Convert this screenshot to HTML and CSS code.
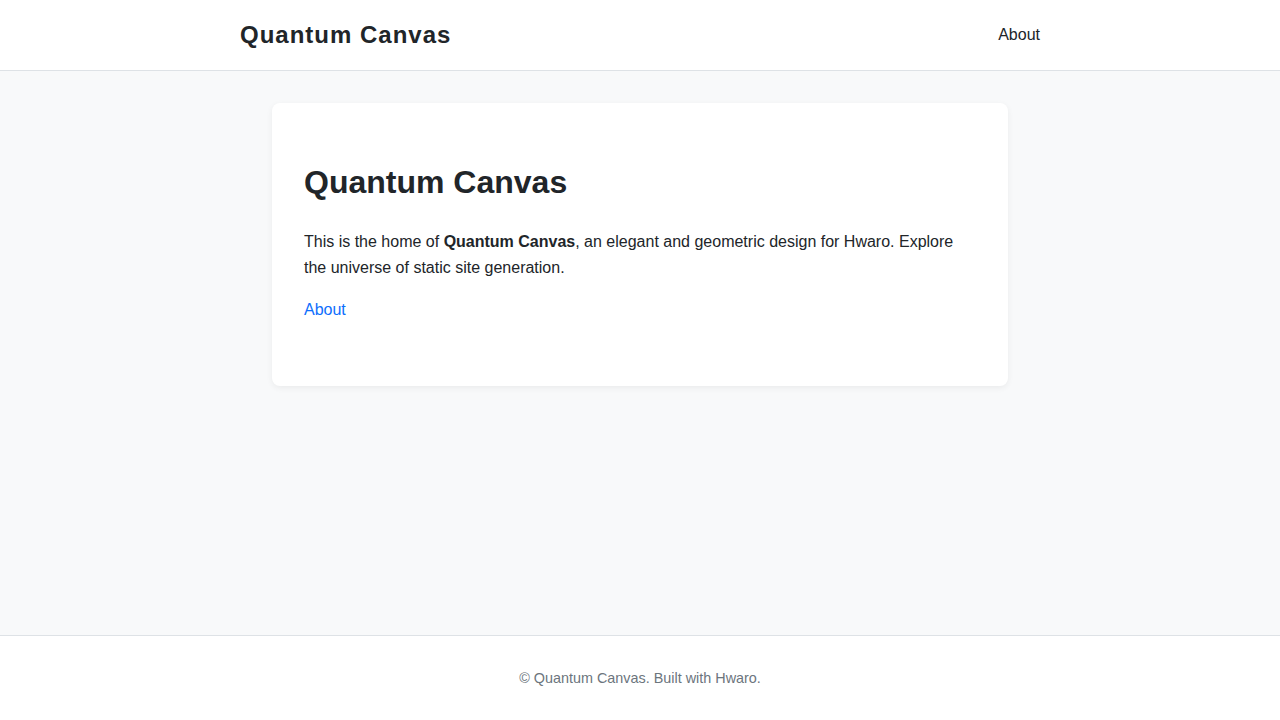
FILE: index.html
```html
<!DOCTYPE html>
<html lang="en">
<head>
<meta charset="utf-8">
<title>Quantum Canvas</title>
<link rel="stylesheet" href="styles.css">
</head>
<body>
<header class="site-header">
  <div class="header-inner">
    <a class="brand" href="#">Quantum Canvas</a>
    <nav class="nav"><a href="#">About</a></nav>
  </div>
</header>
<main class="main">
  <article class="card">
    <h1>Quantum Canvas</h1>
    <p class="intro">This is the home of <strong>Quantum Canvas</strong>, an elegant and geometric design for Hwaro. Explore the universe of static site generation.</p>
    <p class="more"><a class="link" href="#">About</a></p>
  </article>
</main>
<footer class="site-footer">
  <p>© Quantum Canvas. Built with Hwaro.</p>
</footer>
</body>
</html>
```
FILE: styles.css
```css
* { box-sizing: border-box; }
html, body { margin: 0; padding: 0; }
body {
  font-family: "Liberation Sans", Arial, sans-serif;
  font-size: 16px;
  line-height: 1.6;
  color: #212529;
  background: #f8f9fa;
  min-height: 100vh;
  display: flex;
  flex-direction: column;
}
.site-header {
  background: #fff;
  border-bottom: 1px solid #dee2e6;
}
.header-inner {
  width: 800px;
  margin: 0 auto;
  height: 70px;
  display: flex;
  align-items: center;
  justify-content: space-between;
}
.brand {
  font-size: 24px;
  font-weight: 700;
  letter-spacing: 1px;
  color: #212529;
  text-decoration: none;
}
.nav a {
  color: #212529;
  text-decoration: none;
  font-size: 16px;
}
.main {
  flex: 1;
  padding: 32px 0;
}
.card {
  width: 736px;
  margin: 0 auto;
  background: #fff;
  border-radius: 8px;
  box-shadow: 0 2px 6px rgba(0, 0, 0, 0.06);
  padding: 32px 32px 47px;
}
.card h1 {
  font-size: 32px;
  margin: 22.4px 0 20.5px;
  line-height: 1.6;
}
.card .intro { margin: 0 0 17px; }
.card .more { margin: 0 0 16px; }
.link { color: #0d6efd; text-decoration: none; }
.site-footer {
  background: #fff;
  border-top: 1px solid #dee2e6;
  padding: 31px 0;
  text-align: center;
}
.site-footer p {
  margin: 0;
  font-size: 14.4px;
  line-height: 22px;
  color: #6c757d;
}
```
